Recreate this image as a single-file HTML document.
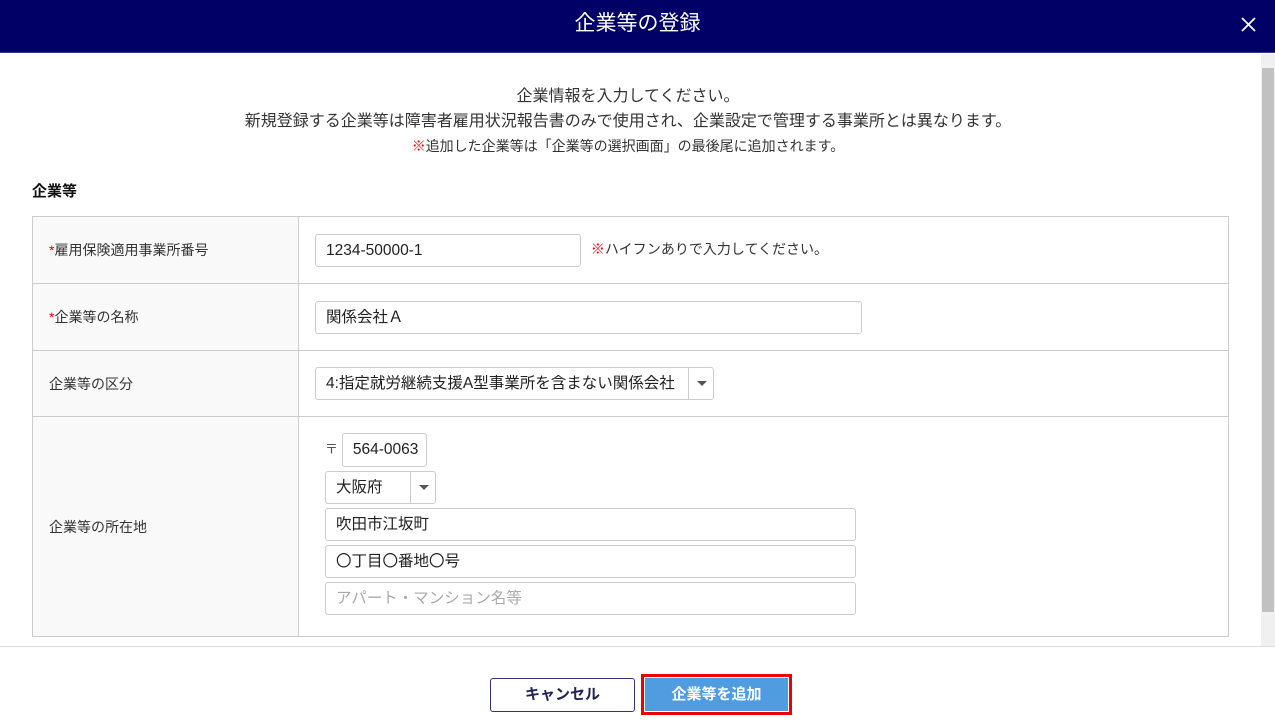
<!DOCTYPE html>
<html><head><meta charset="utf-8"><style>
*{box-sizing:border-box;margin:0;padding:0}
body{width:1275px;height:727px;overflow:hidden;background:#fff;font-family:"Liberation Sans","Noto Sans CJK JP",sans-serif;color:#333;position:relative}
.hd{position:absolute;left:0;top:0;width:1275px;height:53px;background:#000066;border-bottom:1px solid #3a3a8a;color:#fff;font-size:21px;text-align:center;line-height:48px}
.x{position:absolute;right:19px;top:17px;width:15px;height:15px}
.sb{position:absolute;left:1261px;top:54px;width:14px;height:592px;background:#f0f0f0}
.th{position:absolute;left:1262px;top:68px;width:12px;height:544px;background:#c1c1c1}
.intro{position:absolute;left:0;top:84px;width:1256px;text-align:center;font-size:16px;line-height:25px;color:#333}
.intro .s{font-size:14px;line-height:22px}
.red{color:#e00}
h3{position:absolute;left:32px;top:180px;font-size:15px;font-weight:bold;color:#111}
table{position:absolute;left:32px;top:216px;width:1197px;border-collapse:collapse;font-size:14px}
td{border:1px solid #ccc;vertical-align:middle}
td.l{width:266px;background:#f9f9f9;padding-left:16px;color:#333;font-size:14px}
td.r{padding-left:16px}
.in{display:inline-block;height:33px;border:1px solid #ccc;border-radius:3px;padding-left:10px;line-height:31px;font-size:15.5px;color:#222;vertical-align:middle;background:#fff;white-space:nowrap}
.sel{position:relative}
.sel .ar{position:absolute;right:0;top:0;width:25px;height:31px;border-left:1px solid #ccc}
.sel .ar:after{content:"";position:absolute;left:8px;top:13px;border:5px solid transparent;border-top:5px solid #555}
.ft{position:absolute;left:0;top:646px;width:1275px;border-top:1px solid #ddd}
.b1{position:absolute;left:490px;top:678px;width:145px;height:34px;border:1px solid #333377;border-radius:3px;text-align:center;line-height:32px;font-weight:bold;font-size:15px;color:#222255}
.b2{position:absolute;left:641px;top:674px;width:151px;height:41px;border:3px solid #e00;}
.b2 div{margin:1px;height:33px;background:#4f9de0;color:#fff;font-weight:bold;font-size:15px;text-align:center;line-height:33px}
</style></head><body>
<div class="hd">企業等の登録<svg class="x" viewBox="0 0 15 15"><path d="M1 1L14 14M14 1L1 14" stroke="#fff" stroke-width="1.8"/></svg></div>
<div class="sb"></div><div class="th"></div>
<div class="intro">企業情報を入力してください。<br>新規登録する企業等は障害者雇用状況報告書のみで使用され、企業設定で管理する事業所とは異なります。<br><span class="s"><span class="red">※</span>追加した企業等は「企業等の選択画面」の最後尾に追加されます。</span></div>
<h3>企業等</h3>
<table>
<tr style="height:67px"><td class="l"><span class="red">*</span>雇用保険適用事業所番号</td><td class="r"><span class="in" style="width:266px">1234-50000-1</span> <span style="font-size:14px;margin-left:6px"><span class="red">※</span>ハイフンありで入力してください。</span></td></tr>
<tr style="height:67px"><td class="l"><span class="red">*</span>企業等の名称</td><td class="r"><span class="in" style="width:547px">関係会社Ａ</span></td></tr>
<tr style="height:66px"><td class="l">企業等の区分</td><td class="r"><span class="in sel" style="width:399px">4:指定就労継続支援A型事業所を含まない関係会社<span class="ar"></span></span></td></tr>
<tr style="height:220px"><td class="l">企業等の所在地</td><td class="r" style="padding-left:26px;padding-bottom:6px">
<div style="margin-bottom:4px"><span style="font-size:13px;color:#555">〒</span> <span class="in" style="width:85px;height:34px">564-0063</span></div>
<div style="margin-bottom:4px"><span class="in sel" style="width:111px">大阪府<span class="ar"></span></span></div>
<div style="margin-bottom:4px"><span class="in" style="width:531px">吹田市江坂町</span></div>
<div style="margin-bottom:4px"><span class="in" style="width:531px">〇丁目〇番地〇号</span></div>
<div><span class="in" style="width:531px;color:#aaa">アパート・マンション名等</span></div>
</td></tr>
</table>
<div class="ft"></div>
<div class="b1">キャンセル</div>
<div class="b2"><div>企業等を追加</div></div>
</body></html>
